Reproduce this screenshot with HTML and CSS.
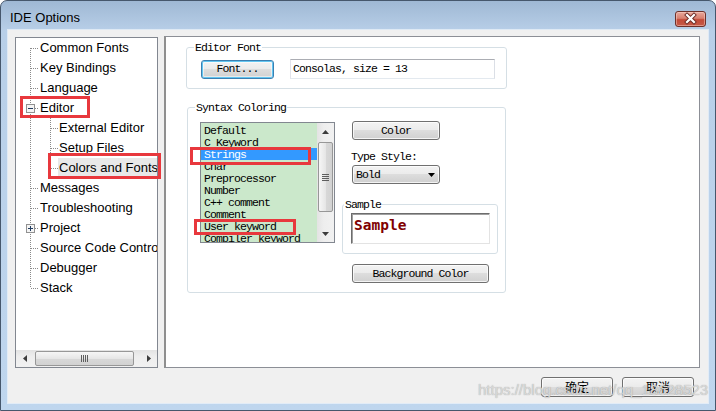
FILE: index.html
```html
<!DOCTYPE html>
<html>
<head>
<meta charset="utf-8">
<title>IDE Options</title>
<link rel="stylesheet" href="styles.css">
</head>
<body>
<div class="window">
  <div class="titlebar">
    <span class="title">IDE Options</span>
    <div class="close">
      <svg width="29" height="14" viewBox="0 0 29 14">
        <path d="M11 3 L18 10 M18 3 L11 10" stroke="#6b2a25" stroke-width="4" stroke-linecap="square" fill="none"/>
        <path d="M11 3 L18 10 M18 3 L11 10" stroke="#ffffff" stroke-width="2.2" stroke-linecap="square" fill="none"/>
      </svg>
    </div>
  </div>

  <div class="client">
    <div class="main">
      <div class="tree">
        <ul class="tree-list">
          <li class="row"><svg class="twig" width="23" height="20"><line class="dot" x1="14.5" y1="10" x2="14.5" y2="20"/><line class="dot" x1="15" y1="10.5" x2="23" y2="10.5"/></svg><span class="label">Common Fonts</span></li>
          <li class="row"><svg class="twig" width="23" height="20"><line class="dot" x1="14.5" y1="0" x2="14.5" y2="20"/><line class="dot" x1="15" y1="10.5" x2="23" y2="10.5"/></svg><span class="label">Key Bindings</span></li>
          <li class="row"><svg class="twig" width="23" height="20"><line class="dot" x1="14.5" y1="0" x2="14.5" y2="20"/><line class="dot" x1="15" y1="10.5" x2="23" y2="10.5"/></svg><span class="label">Language</span></li>
          <li class="row"><svg class="twig" width="23" height="20"><line class="dot" x1="14.5" y1="0" x2="14.5" y2="6"/><line class="dot" x1="14.5" y1="16" x2="14.5" y2="20"/><rect class="expander" x="10.5" y="6.5" width="8" height="8"/><line class="sign" x1="12" y1="10.5" x2="17" y2="10.5"/><line class="dot" x1="19" y1="10.5" x2="23" y2="10.5"/></svg><span class="label">Editor</span></li>
          <li class="row"><svg class="twig" width="42" height="20"><line class="dot" x1="14.5" y1="0" x2="14.5" y2="20"/><line class="dot" x1="34.5" y1="0" x2="34.5" y2="20"/><line class="dot" x1="35" y1="10.5" x2="42" y2="10.5"/></svg><span class="label">External Editor</span></li>
          <li class="row"><svg class="twig" width="42" height="20"><line class="dot" x1="14.5" y1="0" x2="14.5" y2="20"/><line class="dot" x1="34.5" y1="0" x2="34.5" y2="20"/><line class="dot" x1="35" y1="10.5" x2="42" y2="10.5"/></svg><span class="label">Setup Files</span></li>
          <li class="row"><svg class="twig" width="42" height="20"><line class="dot" x1="14.5" y1="0" x2="14.5" y2="20"/><line class="dot" x1="34.5" y1="0" x2="34.5" y2="10"/><line class="dot" x1="35" y1="10.5" x2="42" y2="10.5"/></svg><span class="label selected">Colors and Fonts</span></li>
          <li class="row"><svg class="twig" width="23" height="20"><line class="dot" x1="14.5" y1="0" x2="14.5" y2="20"/><line class="dot" x1="15" y1="10.5" x2="23" y2="10.5"/></svg><span class="label">Messages</span></li>
          <li class="row"><svg class="twig" width="23" height="20"><line class="dot" x1="14.5" y1="0" x2="14.5" y2="20"/><line class="dot" x1="15" y1="10.5" x2="23" y2="10.5"/></svg><span class="label">Troubleshooting</span></li>
          <li class="row"><svg class="twig" width="23" height="20"><line class="dot" x1="14.5" y1="0" x2="14.5" y2="6"/><line class="dot" x1="14.5" y1="16" x2="14.5" y2="20"/><rect class="expander" x="10.5" y="6.5" width="8" height="8"/><line class="sign" x1="12" y1="10.5" x2="17" y2="10.5"/><line class="sign" x1="14.5" y1="8" x2="14.5" y2="13"/><line class="dot" x1="19" y1="10.5" x2="23" y2="10.5"/></svg><span class="label">Project</span></li>
          <li class="row"><svg class="twig" width="23" height="20"><line class="dot" x1="14.5" y1="0" x2="14.5" y2="20"/><line class="dot" x1="15" y1="10.5" x2="23" y2="10.5"/></svg><span class="label">Source Code Control</span></li>
          <li class="row"><svg class="twig" width="23" height="20"><line class="dot" x1="14.5" y1="0" x2="14.5" y2="20"/><line class="dot" x1="15" y1="10.5" x2="23" y2="10.5"/></svg><span class="label">Debugger</span></li>
          <li class="row"><svg class="twig" width="23" height="20"><line class="dot" x1="14.5" y1="0" x2="14.5" y2="10"/><line class="dot" x1="15" y1="10.5" x2="23" y2="10.5"/></svg><span class="label">Stack</span></li>
        </ul>
        <div class="hscroll">
          <div class="sb-arrow"><svg width="4" height="7"><path d="M4 0 L4 7 L0 3.5Z" fill="#3c3c3c"/></svg></div>
          <div class="hthumb"><svg width="7" height="7"><path d="M0.5 0 V7 M2.5 0 V7 M4.5 0 V7 M6.5 0 V7" stroke="#5e5e5e" stroke-width="1"/></svg></div>
          <div class="sb-track"></div>
          <div class="sb-arrow"><svg width="4" height="7"><path d="M0 0 L0 7 L4 3.5Z" fill="#3c3c3c"/></svg></div>
        </div>
      </div>

      <div class="panel">
        <fieldset class="group g-font">
          <legend class="sim">Editor Font</legend>
          <div class="font-row">
            <div class="btn btn-focus btn-font sim">Font...</div>
            <div class="field sim">Consolas, size = 13</div>
          </div>
        </fieldset>

        <fieldset class="group g-syntax">
          <legend class="sim">Syntax Coloring</legend>
          <div class="syntax-body">
            <div class="listbox">
              <ul class="items sim">
                <li>Default</li>
                <li>C Keyword</li>
                <li class="sel">Strings</li>
                <li>Char</li>
                <li>Preprocessor</li>
                <li>Number</li>
                <li>C++ comment</li>
                <li>Comment</li>
                <li>User keyword</li>
                <li>Compiler keyword</li>
              </ul>
              <div class="vscroll">
                <div class="sb-arrow v"><svg width="7" height="4"><path d="M3.5 0 L7 4 L0 4Z" fill="#3c3c3c"/></svg></div>
                <div class="vthumb"><svg width="7" height="7"><path d="M0 0.5 H7 M0 2.5 H7 M0 4.5 H7 M0 6.5 H7" stroke="#5e5e5e" stroke-width="1"/></svg></div>
                <div class="sb-track"></div>
                <div class="sb-arrow v"><svg width="7" height="4"><path d="M0 0 L7 0 L3.5 4Z" fill="#3c3c3c"/></svg></div>
              </div>
            </div>

            <div class="side">
              <div class="btn btn-color sim">Color</div>
              <div class="type-label sim">Type Style:</div>
              <div class="btn combo sim"><span>Bold</span><svg width="7" height="4"><path d="M0 0 L7 0 L3.5 4Z" fill="#000"/></svg></div>
              <fieldset class="group g-sample">
                <legend class="sim">Sample</legend>
                <div class="sample-body">
                  <div class="sample-box">Sample</div>
                </div>
              </fieldset>
              <div class="btn btn-bg sim">Background Color</div>
            </div>
          </div>
        </fieldset>
      </div>
    </div>

    <div class="actions">
      <div class="btn btn-action">确定</div>
      <div class="btn btn-action">取消</div>
    </div>
  </div>

  <div class="mark">https://blog.csdn.net/qq_18628523</div>

  <div class="note note-editor"></div>
  <div class="note note-colors"></div>
  <div class="note note-strings"></div>
  <div class="note note-user"></div>
</div>
</body>
</html>
```

FILE: styles.css
```css
* { box-sizing: border-box; }
html, body { margin: 0; padding: 0; }
body {
  width: 716px;
  height: 411px;
  overflow: hidden;
  background: #ffffff;
  font-family: "Liberation Sans", Arial, sans-serif;
  color: #000;
}

.window {
  position: relative;
  width: 716px;
  height: 411px;
  border: 1px solid #46576c;
  border-radius: 7px 7px 0 0;
  background: linear-gradient(to bottom, #9fb8d4 0px, #b8cfe8 30px, #bfd6ee 100%);
  display: flex;
  flex-direction: column;
  overflow: hidden;
}

.titlebar {
  height: 29px;
  display: flex;
  justify-content: space-between;
  align-items: flex-start;
  padding: 0 9px 0 9px;
  flex: none;
}
.title {
  font-size: 13px;
  line-height: 16px;
  margin-top: 9px;
  color: #000;
}
.close {
  width: 31px;
  height: 16px;
  margin-top: 10px;
  border: 1px solid #6e3029;
  border-radius: 3px;
  background: linear-gradient(to bottom, #e8a99c 0%, #d88070 45%, #c24a38 55%, #c65a48 100%);
  box-shadow: inset 0 0 0 1px rgba(255, 220, 210, 0.45);
  display: flex;
}

.client {
  flex: 1;
  margin: 0 7px 7px 7px;
  background: #f0f0f0;
  padding: 6px 8px 0 7px;
  display: flex;
  flex-direction: column;
  box-shadow: 0 0 0 1px rgba(255, 255, 255, 0.55);
}

.main {
  display: flex;
  gap: 6px;
  height: 332px;
  flex: none;
}

/* ---------- tree ---------- */
.tree {
  width: 143px;
  height: 331px;
  margin-top: 1px;
  border: 1px solid #828790;
  background: #ffffff;
  display: flex;
  flex-direction: column;
  overflow: hidden;
}
.tree-list {
  list-style: none;
  margin: 0;
  padding: 0;
  flex: 1;
  overflow: hidden;
}
.row {
  display: flex;
  align-items: center;
  height: 20px;
  white-space: nowrap;
  font-size: 13px;
}
.twig { flex: none; display: block; }
.dot {
  stroke: #8a8a8a;
  stroke-width: 1;
  stroke-dasharray: 1 1;
  shape-rendering: crispEdges;
}
.expander {
  fill: #f4f4f4;
  stroke: #919191;
  stroke-width: 1;
  shape-rendering: crispEdges;
}
.sign {
  stroke: #1f3b5f;
  stroke-width: 1;
  shape-rendering: crispEdges;
}
.label {
  padding: 0 2px 0 1px;
  line-height: 20px;
  height: 20px;
}
.label.selected {
  background: #e8e8e8;
  padding-right: 6px;
}

.hscroll {
  height: 17px;
  flex: none;
  display: flex;
  background: linear-gradient(to bottom, #e3e3e3, #eeeeee 40%, #f1f1f1);
}
.sb-arrow {
  width: 17px;
  height: 17px;
  flex: none;
  display: flex;
  align-items: center;
  justify-content: center;
}
.sb-track { flex: 1; }
.hthumb {
  width: 99px;
  margin: 1px 0 1px 2px;
  border: 1px solid #979797;
  border-radius: 2px;
  background: linear-gradient(to bottom, #f6f6f6, #e6e6e6 50%, #d8d8d8 51%, #d2d2d2);
  display: flex;
  align-items: center;
  justify-content: center;
}

/* ---------- right panel ---------- */
.panel {
  width: 536px;
  height: 332px;
  background: #ffffff;
  border: 1px solid #8c8f96;
  border-left: 2px solid #8f8f8f;
  display: flex;
  flex-direction: column;
  align-items: flex-start;
}

.sim {
  font-family: "Liberation Mono", "DejaVu Sans Mono", monospace;
  font-size: 11.5px;
  letter-spacing: -0.9px;
  line-height: 12px;
}

fieldset.group {
  border: 1px solid #d5dfe5;
  border-radius: 3px;
  margin: 0;
  padding: 0;
  min-width: 0;
}
fieldset.group legend {
  padding: 2px 1px 0 1px;
  margin-left: 7px;
  height: 14px;
}

.g-font {
  width: 321px;
  margin: 3px 0 0 20px !important;
}
.font-row {
  display: flex;
  align-items: center;
  gap: 16px;
  padding: 5px 0 9px 14px;
}

.btn {
  border: 1px solid #707070;
  border-radius: 3px;
  background: linear-gradient(to bottom, #f3f3f3 0%, #ebebeb 49%, #dddddd 50%, #d0d0d0 100%);
  box-shadow: inset 0 0 0 1px rgba(255, 255, 255, 0.75);
  display: flex;
  align-items: center;
  justify-content: center;
  white-space: nowrap;
  flex: none;
}
.btn-focus {
  border-color: #3c7fb1;
  box-shadow: inset 0 0 0 1px #63c6f1, inset 0 0 0 2px rgba(255, 255, 255, 0.5);
}
.btn-font { width: 73px; height: 19px; }

.field {
  width: 205px;
  height: 20px;
  border: 1px solid;
  border-color: #abadb3 #dbdfe6 #e3e9ef #e2e3ea;
  background: #fff;
  padding-left: 2px;
  line-height: 18px;
  white-space: nowrap;
}

.g-syntax {
  width: 319px;
  margin: 11px 0 0 21px !important;
}
.syntax-body {
  display: flex;
  align-items: flex-start;
  padding: 8px 0 9px 12px;
}

.listbox {
  width: 135px;
  height: 121px;
  border: 1px solid #828790;
  background: #cbe8cb;
  display: flex;
  flex: none;
}
.items {
  list-style: none;
  margin: 0;
  padding: 1px 0 0 0;
  flex: 1;
  overflow: hidden;
}
.items li {
  height: 12px;
  line-height: 11px;
  padding: 1px 0 0 3px;
  white-space: nowrap;
}
.items li.sel {
  background: #3399ff;
  color: #fff;
}
.vscroll {
  width: 17px;
  flex: none;
  display: flex;
  flex-direction: column;
  background: linear-gradient(to right, #e3e3e3, #eeeeee 40%, #f1f1f1);
}
.vthumb {
  height: 70px;
  margin: 2px 1px 0 1px;
  border: 1px solid #979797;
  border-radius: 2px;
  background: linear-gradient(to right, #f6f6f6, #e6e6e6 50%, #d8d8d8 51%, #d2d2d2);
  display: flex;
  align-items: center;
  justify-content: center;
}

.side {
  margin: -1px 0 0 7px;
  display: flex;
  flex-direction: column;
  align-items: flex-start;
}
.btn-color {
  width: 88px;
  height: 19px;
  margin-left: 10px;
}
.type-label {
  margin: 11px 0 0 9px;
  white-space: nowrap;
}
.combo {
  width: 88px;
  height: 19px;
  margin: 2px 0 0 10px;
  justify-content: space-between;
  padding: 0 4px 0 3px;
}

.g-sample {
  width: 156px;
  margin: 13px 0 0 0 !important;
}
.g-sample legend { margin-left: 1px !important; }
.sample-body {
  padding: 2px 7px 9px 8px;
}
.sample-box {
  width: 139px;
  height: 31px;
  border: 1px solid;
  border-color: #6d6d6d #e3e3e3 #e3e3e3 #6d6d6d;
  box-shadow: inset 1px 1px 0 #a0a0a0;
  background: #fff;
  padding: 2px 0 0 2px;
  font-family: "DejaVu Sans Mono", "Liberation Mono", monospace;
  font-weight: bold;
  font-size: 14.5px;
  line-height: 18px;
  color: #800000;
}
.btn-bg {
  width: 137px;
  height: 19px;
  margin: 10px 0 0 10px;
}

/* ---------- bottom buttons ---------- */
.actions {
  display: flex;
  justify-content: flex-end;
  gap: 9px;
  margin-top: 9px;
  padding-right: 6px;
}
.btn-action {
  width: 72px;
  height: 20px;
  font-family: "Noto Sans CJK SC", "Noto Sans CJK JP", sans-serif;
  font-size: 12px;
  line-height: 14px;
}

/* ---------- overlays ---------- */
.mark {
  position: absolute;
  left: 477px;
  top: 380px;
  font-family: "Liberation Sans", Arial, sans-serif;
  font-size: 15px;
  line-height: 17px;
  white-space: nowrap;
  color: rgba(222, 222, 222, 0.9);
  text-shadow: 0 0 1px rgba(120, 120, 120, 0.7);
  pointer-events: none;
}

.note {
  position: absolute;
  border: 3px solid #e8383d;
  pointer-events: none;
}
.note-editor { left: 19px; top: 95px; width: 70px; height: 22px; }
.note-colors { left: 47px; top: 152px; width: 113px; height: 26px; }
.note-strings { left: 189px; top: 146px; width: 121px; height: 18px; }
.note-user { left: 193px; top: 218px; width: 102px; height: 16px; }
```
